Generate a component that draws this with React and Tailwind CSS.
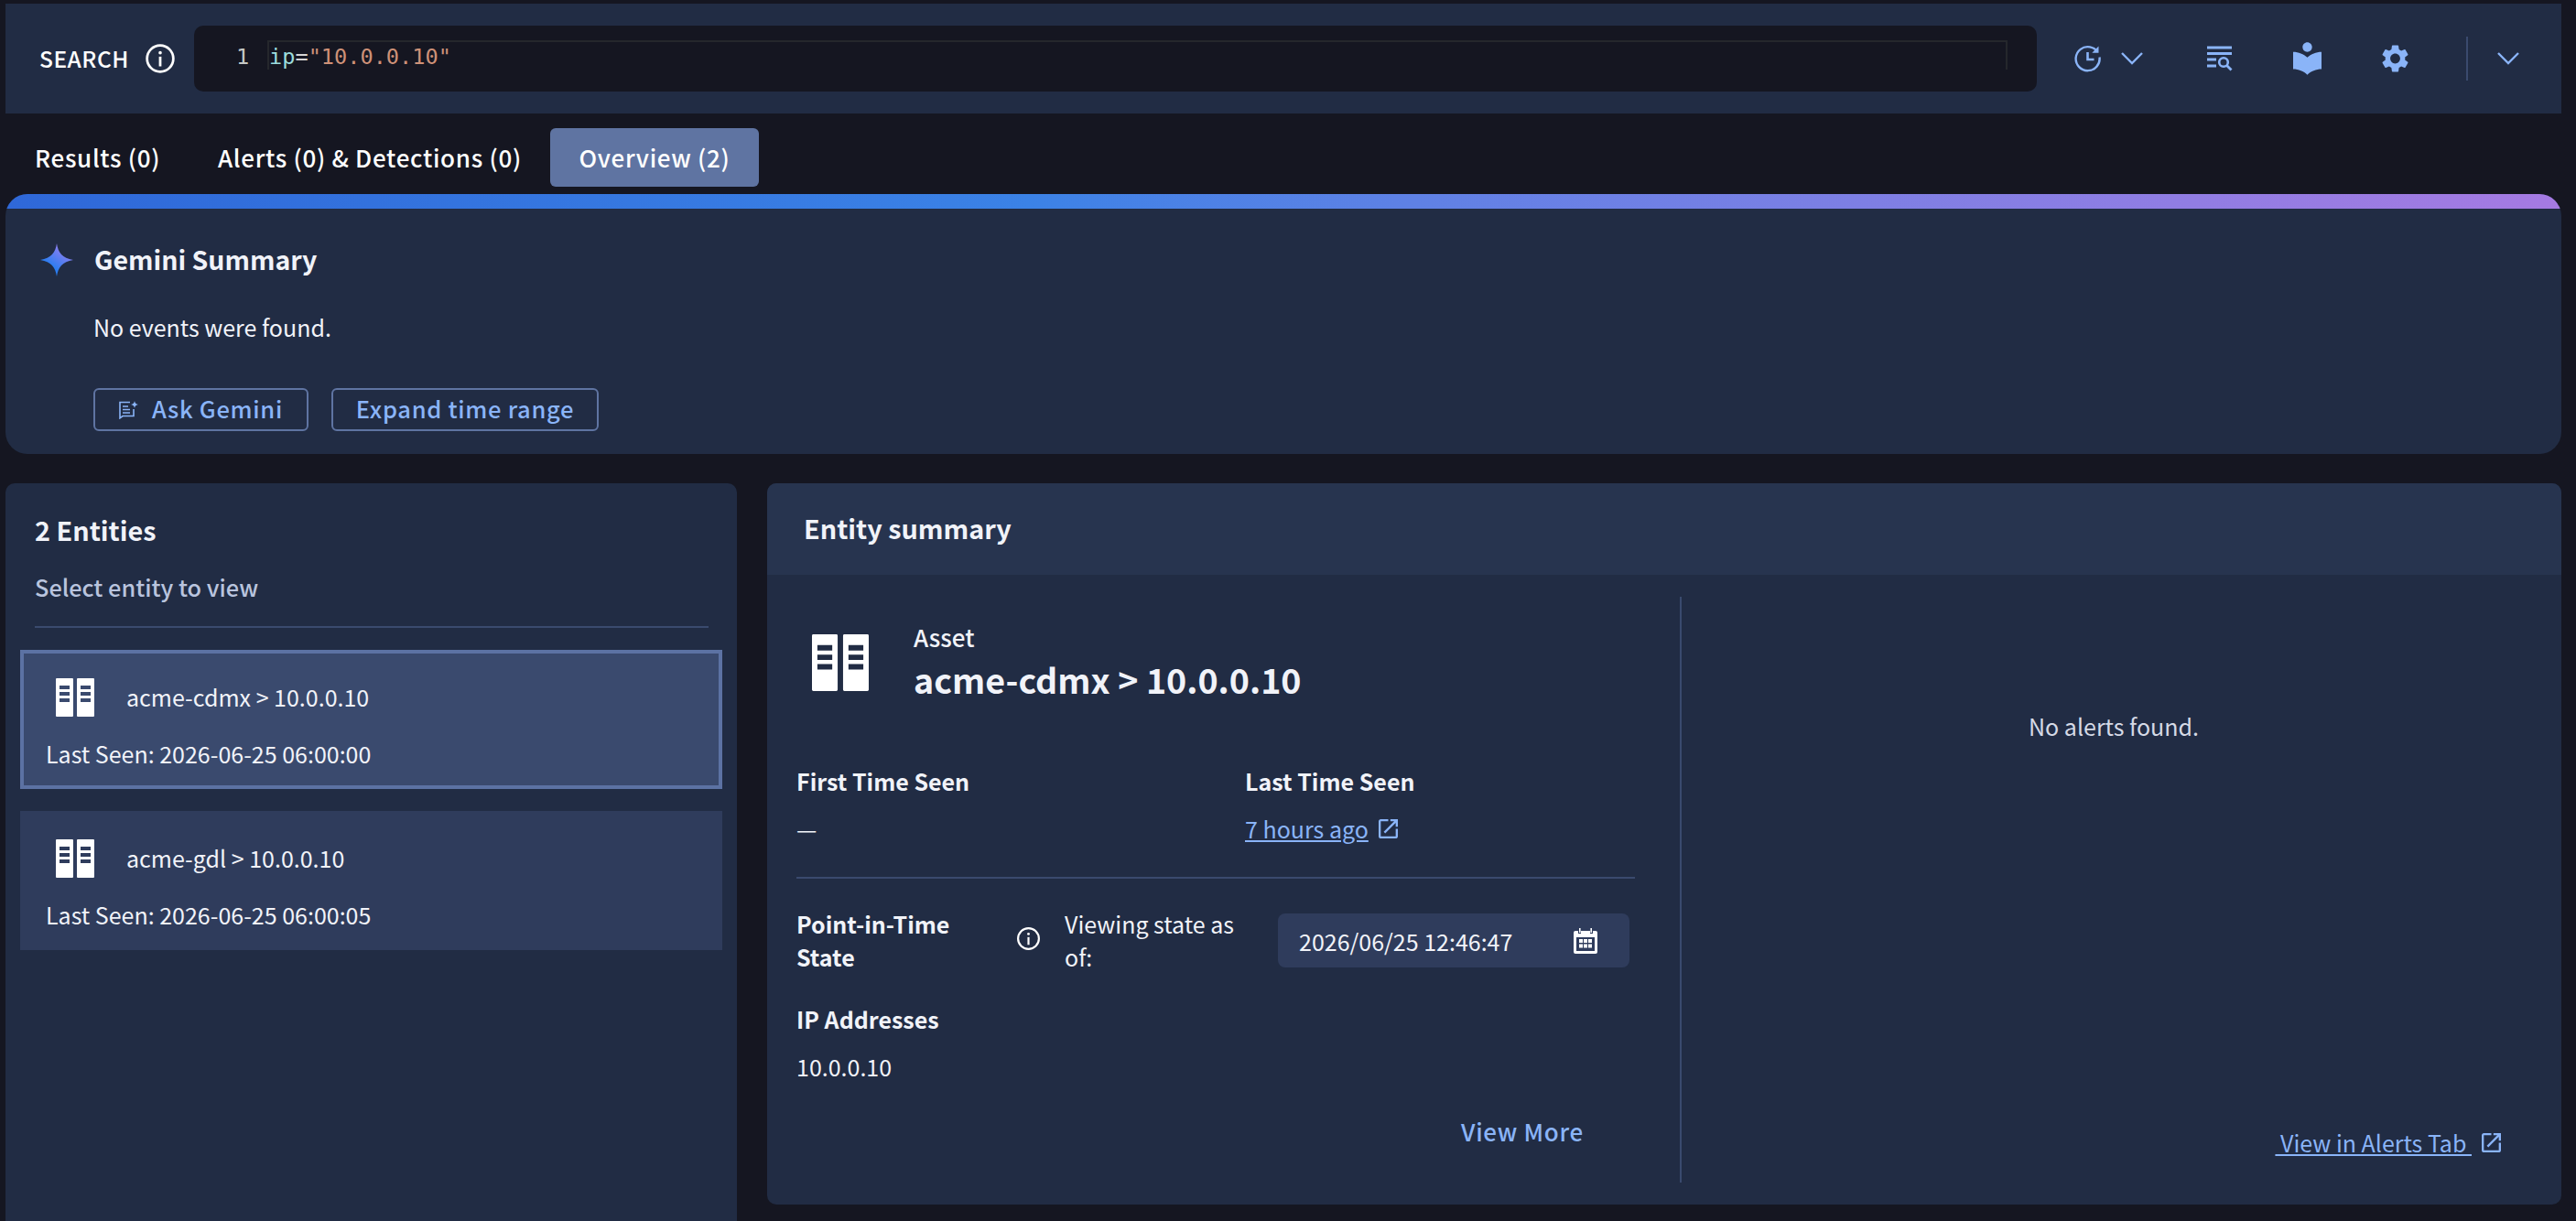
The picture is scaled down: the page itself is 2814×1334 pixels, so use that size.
import React from "react";

function InfoIcon({ className }) {
  return (
    <svg viewBox="0 0 32 32" className={className} fill="none" stroke="currentColor">
      <circle cx="16" cy="16" r="13.5" strokeWidth="2.6" />
      <circle cx="16" cy="10" r="1.7" fill="currentColor" stroke="none" />
      <path d="M16 14v10" strokeWidth="2.6" />
    </svg>
  );
}

function Chevron({ className }) {
  return (
    <svg viewBox="0 0 24 14" className={className} fill="none" stroke="currentColor" strokeWidth="2.4">
      <path d="M1 1l11 11L23 1" />
    </svg>
  );
}

function OpenIcon({ className }) {
  return (
    <svg viewBox="3 3 18 18" className={className} fill="currentColor">
      <path d="M19 19H5V5h7V3H5c-1.110 0-2 .9-2 2v14c0 1.100.89 2 2 2h14c1.100 0 2-.9 2-2v-7h-2v7zM14 3v2h3.590l-9.830 9.830 1.410 1.410L19 6.410V10h2V3h-7z" />
    </svg>
  );
}

function ServerIcon({ className }) {
  return (
    <svg viewBox="0 0 42 42" className={className}>
      <path
        fill="#fff"
        fillRule="evenodd"
        d="M1 0h17a1 1 0 0 1 1 1v40a1 1 0 0 1-1 1H1a1 1 0 0 1-1-1V1a1 1 0 0 1 1-1zM4 8v4h11V8zm0 7v4h11v-4zm0 7v4h11v-4zM24 0h17a1 1 0 0 1 1 1v40a1 1 0 0 1-1 1H24a1 1 0 0 1-1-1V1a1 1 0 0 1 1-1zm3 8v4h11V8zm0 7v4h11v-4zm0 7v4h11v-4z"
      />
    </svg>
  );
}

function HistoryIcon({ className }) {
  return (
    <svg viewBox="0 0 30 30" className={className} fill="none" stroke="currentColor" strokeWidth="2.4">
      <path d="M27.500 13.500A13 13 0 1 1 17 2.400a13 13 0 0 1 7 3.600" />
      <path d="M26.500 1.500v7.200h-7.200z" fill="currentColor" stroke="none" />
      <path d="M14.500 8v8h7" strokeWidth="2.600" />
    </svg>
  );
}

function ListSearchIcon({ className }) {
  return (
    <svg viewBox="0 0 28 28" className={className} fill="none" stroke="currentColor">
      <path d="M0 2h27M0 8.500h27M0 15h10M0 22h10" strokeWidth="2.800" />
      <circle cx="18" cy="18" r="4.800" strokeWidth="2.600" />
      <path d="M21.500 21.500l5 5" strokeWidth="2.800" />
    </svg>
  );
}

function BookIcon({ className }) {
  return (
    <svg viewBox="3 2 18 20.550" className={className} fill="currentColor">
      <path d="M12 11.550C9.640 9.350 6.480 8 3 8v11c3.480 0 6.640 1.350 9 3.550 2.360-2.190 5.520-3.550 9-3.550V8c-3.480 0-6.640 1.350-9 3.550zM12 8c1.660 0 3-1.340 3-3s-1.340-3-3-3-3 1.340-3 3 1.340 3 3 3z" />
    </svg>
  );
}

function GearIcon({ className }) {
  return (
    <svg viewBox="2.500 2 19 20" className={className} fill="currentColor">
      <path d="M19.140 12.940c.04-.3.06-.61.06-.94 0-.32-.02-.64-.07-.94l2.030-1.580c.18-.14.23-.41.12-.61l-1.920-3.320c-.12-.22-.37-.29-.59-.22l-2.390.96c-.5-.38-1.030-.7-1.620-.94l-.36-2.540c-.04-.24-.24-.41-.48-.41h-3.840c-.24 0-.43.17-.47.41l-.36 2.540c-.59.24-1.130.57-1.620.94l-2.390-.96c-.22-.08-.47 0-.59.22L2.740 8.870c-.12.21-.08.47.12.61l2.030 1.580c-.05.3-.09.63-.09.94s.02.64.07.94l-2.030 1.580c-.18.14-.23.41-.12.61l1.920 3.320c.12.22.37.29.59.22l2.390-.96c.5.38 1.030.7 1.620.94l.36 2.540c.05.24.24.41.48.41h3.840c.24 0 .44-.17.47-.41l.36-2.540c.59-.24 1.130-.56 1.620-.94l2.390.96c.22.08.47 0 .59-.22l1.920-3.320c.12-.22.07-.47-.12-.61l-2.010-1.580zM12 15.600c-1.980 0-3.600-1.620-3.600-3.600s1.620-3.600 3.600-3.600 3.600 1.620 3.600 3.600-1.620 3.600-3.600 3.600z" />
    </svg>
  );
}

function CalendarIcon({ className }) {
  return (
    <svg viewBox="0 0 28 28" className={className}>
      <path fill="#fff" fillRule="evenodd" d="M3 3h3v3h3V3h10v3h3V3h3a2 2 0 0 1 2 2v21a2 2 0 0 1-2 2H3a2 2 0 0 1-2-2V5a2 2 0 0 1 2-2zm1 7v15h20V10z" />
      <path fill="#fff" d="M7 0h1.600v5H7zM19.400 0H21v5h-1.600zM7 12h4v4H7zm5 0h4v4h-4zm5 0h4v4h-4zM7 17.500h4v4H7zm5 0h4v4h-4zm5 0h4v4h-4z" />
    </svg>
  );
}

function AskIcon({ className }) {
  return (
    <svg viewBox="0 0 22 20" className={className} fill="none" stroke="currentColor" strokeWidth="1.600">
      <path d="M12 1.500H1v17.300l3-2.300h12V9" />
      <path d="M4 6h6M4 9.500h8M4 13h8" />
      <path d="M17 0c.3 2.400 1.600 3.700 4 4-2.400.3-3.700 1.600-4 4-.3-2.400-1.600-3.700-4-4 2.400-.3 3.700-1.600 4-4z" fill="currentColor" stroke="none" />
    </svg>
  );
}

function GeminiStar({ className }) {
  return (
    <svg viewBox="0 0 36 36" className={className}>
      <defs>
        <linearGradient id="star" x1="0.2" y1="1" x2="0.85" y2="0.1">
          <stop offset="0.3" stopColor="#2b7df0" />
          <stop offset="1" stopColor="#a07ff0" />
        </linearGradient>
      </defs>
      <path fill="url(#star)" d="M18 0C19.500 10 24 16 36 18 24 20 19.500 26 18 36 16.500 26 12 20 0 18 12 16 16.500 10 18 0z" />
    </svg>
  );
}

function EntityRow({ name, seen, selected }) {
  return (
    <div className={`h-[152px] border-4 pl-[24px] pt-[27px] ${selected ? "border-[#5c72a3] bg-[#3a4a6e]" : "border-transparent bg-[#2f3c5c]"}`}>
      <div className="flex items-center pl-[11px]">
        <ServerIcon className="h-[42px] w-[42px]" />
        <span className="-mt-[2px] ml-[35px] text-[25px] leading-[38px] text-[#f1f3f9]">{name}</span>
      </div>
      <p className="mt-[21px] text-[25px] leading-[38px] text-[#f1f3f9]">{seen}</p>
    </div>
  );
}

export default function App() {
  return (
    <div
      className="flex h-screen flex-col overflow-hidden bg-[#151621] pl-[6px] pr-[16px] pt-[4px] text-white"
      style={{ fontFamily: '"Noto Sans CJK JP", "Noto Sans", sans-serif' }}
    >
      {/* search bar */}
      <div className="flex h-[120px] shrink-0 items-center bg-[#212c44] text-[#8ab4f8]">
        <span className="ml-[37px] w-[95px] text-[24.500px] font-medium tracking-[0.5px] text-white">SEARCH</span>
        <InfoIcon className="ml-[20px] h-[34px] w-[34px] text-white" />
        <div className="relative ml-[20px] h-[72px] w-[2013px] rounded-[10px] bg-[#151621]">
          <span className="absolute left-[46px] top-[18px] font-['DejaVu_Sans_Mono'] text-[23.600px] leading-[32px] text-[#c5c8c6]">1</span>
          <div className="absolute left-[80px] right-[32px] top-[16px] h-[32px] border-x-2 border-t-2 border-[#25272c]"></div>
          <span className="absolute left-[82px] top-[18px] font-['DejaVu_Sans_Mono'] text-[23.600px] leading-[32px]">
            <span className="text-[#9cdcdc]">ip</span>
            <span className="text-[#d4d4d4]">=</span>
            <span className="text-[#ce9178]">"10.0.0.10"</span>
          </span>
        </div>
        <HistoryIcon className="ml-[41px] h-[30px] w-[30px]" />
        <Chevron className="ml-[21px] h-[14px] w-[24px]" />
        <ListSearchIcon className="ml-[70px] h-[28px] w-[28px]" />
        <BookIcon className="ml-[66px] h-[36px] w-[31px]" />
        <GearIcon className="ml-[66px] h-[30px] w-[29px]" />
        <div className="ml-[63px] h-[48px] w-[2px] bg-[#3a4a6e]"></div>
        <Chevron className="ml-[32px] h-[14px] w-[24px]" />
      </div>

      {/* tabs */}
      <div className="mt-[16px] flex h-[64px] shrink-0 items-center text-[26px] font-medium tracking-[0.7px] text-white">
        <span className="-mt-[2px] ml-[32px] w-[136px] whitespace-nowrap">Results (0)</span>
        <span className="-mt-[2px] ml-[64px] w-[331px] whitespace-nowrap">Alerts (0) &amp; Detections (0)</span>
        <span className="ml-[32px] flex h-[64px] w-[228px] items-center justify-center rounded-[6px] bg-[#5f74a2] pb-[2px]">Overview (2)</span>
      </div>

      {/* gemini summary */}
      <div className="mt-[8px] shrink-0 overflow-hidden rounded-[24px] bg-[#212c44]">
        <div className="h-[16px] bg-gradient-to-r from-[#2f68d8] via-[#3b82e6] via-40% to-[#a57ae2]"></div>
        <div className="pb-[25px] pl-[38px] pt-[36px]">
          <div className="flex h-[40px] items-center">
            <GeminiStar className="h-[36px] w-[36px]" />
            <h2 className="-mt-[2px] ml-[23px] text-[28.500px] font-bold leading-[38px] text-[#f1f3f9]">Gemini Summary</h2>
          </div>
          <p className="ml-[58px] mt-[34px] text-[25px] leading-[38px] text-[#f1f3f9]">No events were found.</p>
          <div className="ml-[58px] mt-[48px] flex gap-[25px] text-[25.500px] font-medium tracking-[0.7px] text-[#8ab4f8]">
            <button className="flex h-[47px] w-[235px] items-center justify-center gap-[14px] rounded-[6px] border-2 border-[#5f74a2] pb-[2px]">
              <AskIcon className="mt-[2px] h-[20px] w-[22px]" />
              Ask Gemini
            </button>
            <button className="flex h-[47px] w-[292px] items-center justify-center rounded-[6px] border-2 border-[#5f74a2] pb-[2px]">Expand time range</button>
          </div>
        </div>
      </div>

      <div className="mt-[32px] flex items-start gap-[33px]">
        {/* entity list */}
        <div className="h-[840px] w-[799px] shrink-0 rounded-[10px] bg-[#212c44] pt-[31px]">
          <h2 className="ml-[32px] text-[28.800px] font-bold leading-[40px] text-[#f1f3f9]">2 Entities</h2>
          <p className="ml-[32px] mt-[22px] text-[25.300px] font-medium leading-[40px] text-[#b9c4de]">Select entity to view</p>
          <div className="ml-[32px] mr-[31px] mt-[23px] h-[2px] bg-[#3a4a6e]"></div>
          <div className="mx-[16px] mt-[24px] flex flex-col gap-[24px]">
            <EntityRow name="acme-cdmx > 10.0.0.10" seen="Last Seen: 2026-06-25 06:00:00" selected />
            <EntityRow name="acme-gdl > 10.0.0.10" seen="Last Seen: 2026-06-25 06:00:05" />
          </div>
        </div>

        {/* entity summary */}
        <div className="h-[788px] flex-1 overflow-hidden rounded-[10px] bg-[#212c44]">
          <div className="flex h-[100px] items-center bg-[#27344f] pb-[2px] pl-[40px]">
            <h2 className="text-[28.800px] font-bold text-[#f1f3f9]">Entity summary</h2>
          </div>
          <div className="mt-[24px] flex h-[640px]">
            <div className="w-[999px] shrink-0 border-r-2 border-[#3a4a6e] pl-[32px] text-[#f1f3f9]">
              <div className="w-[916px]">
                <div className="mt-[26px] flex items-start">
                  <ServerIcon className="ml-[17px] mt-[15px] h-[62px] w-[62px]" />
                  <div className="ml-[49px]">
                    <p className="text-[26px] font-medium leading-[36px]">Asset</p>
                    <p className="mt-[2px] text-[37.600px] font-bold leading-[52px]">acme-cdmx &gt; 10.0.0.10</p>
                  </div>
                </div>
                <div className="mt-[67px] grid grid-cols-[490px_1fr] text-[25px] leading-[36px]">
                  <div>
                    <p className="font-bold">First Time Seen</p>
                    <p className="mt-[16px]">—</p>
                  </div>
                  <div>
                    <p className="font-bold">Last Time Seen</p>
                    <p className="mt-[16px] flex items-center text-[#8ab4f8]">
                      <span className="underline">7 hours ago</span>
                      <OpenIcon className="ml-[11px] h-[21px] w-[21px]" />
                    </p>
                  </div>
                </div>
                <div className="mt-[35px] h-[2px] bg-[#3a4a6e]"></div>
                <div className="mt-[31px] flex items-start text-[25px] leading-[36px]">
                  <p className="w-[240px] pr-[40px] font-bold">Point-in-Time State</p>
                  <InfoIcon className="mt-[21px] h-[27px] w-[27px] text-white" />
                  <p className="ml-[26px] w-[195px]">Viewing state as of:</p>
                  <div className="ml-[38px] mt-[7px] flex h-[59px] w-[384px] items-center justify-between rounded-[8px] bg-[#2f3c5c] pl-[23px] pr-[34px]">
                    <span>2026/06/25 12:46:47</span>
                    <CalendarIcon className="h-[28px] w-[28px]" />
                  </div>
                </div>
                <p className="mt-[32px] text-[25px] font-bold leading-[36px]">IP Addresses</p>
                <p className="mt-[16px] text-[25px] leading-[36px]">10.0.0.10</p>
                <p className="mt-[35px] pr-[56px] text-right text-[26px] font-medium leading-[36px] tracking-[0.7px] text-[#8ab4f8]">View More</p>
              </div>
            </div>
            <div className="flex flex-1 flex-col pb-[26px] pr-[66px]">
              <p className="mt-[123px] pl-[49px] text-center text-[25px] leading-[36px] text-[#d5dae6]">No alerts found.</p>
              <p className="mt-auto flex items-center justify-end text-[25px] leading-[36px] text-[#8ab4f8]">
                <span className="underline">&nbsp;View in Alerts Tab&nbsp;</span>
                <OpenIcon className="ml-[11px] h-[21px] w-[21px]" />
              </p>
            </div>
          </div>
        </div>
      </div>
    </div>
  );
}
